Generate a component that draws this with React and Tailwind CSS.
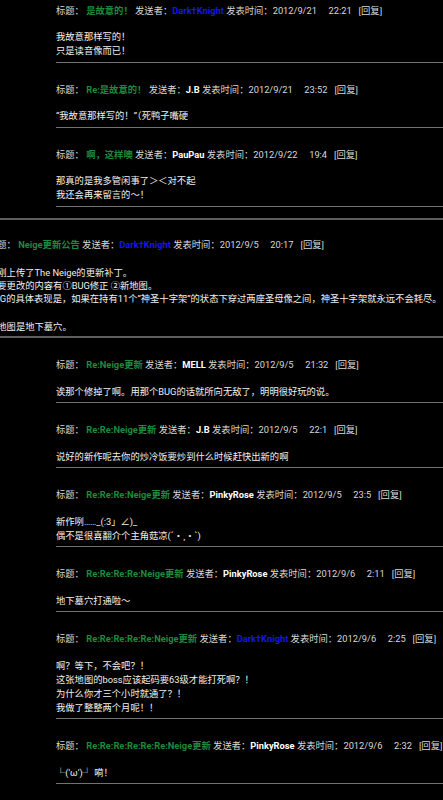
import React from "react";

const DK = "Dark†Knight";

const firstThreadReplies = [
  { title: "是故意的！", sender: DK, date: "2012/9/21", time: "22:21", lines: ["我故意那样写的！", "只是读音像而已！"] },
  { title: "Re:是故意的！", sender: "J.B", date: "2012/9/21", time: "23:52", lines: ["“我故意那样写的！”（死鸭子嘴硬"] },
  { title: "啊，这样噢", sender: "PauPau", date: "2012/9/22", time: "19:4", lines: ["那真的是我多管闲事了＞＜对不起", "我还会再来留言的～！"] },
];

const secondThreadReplies = [
  { title: "Re:Neige更新", sender: "MELL", date: "2012/9/5", time: "21:32", lines: ["诶那个修掉了啊。用那个BUG的话就所向无敌了，明明很好玩的说。"] },
  { title: "Re:Re:Neige更新", sender: "J.B", date: "2012/9/5", time: "22:1", lines: ["说好的新作呢去你的炒冷饭要炒到什么时候赶快出新的啊"] },
  { title: "Re:Re:Re:Neige更新", sender: "PinkyRose", date: "2012/9/5", time: "23:5", lines: ["新作咧……_(:3」∠)_", "偶不是很喜翻介个主角菇凉(´・¸・`)"] },
  { title: "Re:Re:Re:Re:Neige更新", sender: "PinkyRose", date: "2012/9/6", time: "2:11", lines: ["地下墓穴打通啦～"] },
  {
    title: "Re:Re:Re:Re:Re:Neige更新",
    sender: DK,
    date: "2012/9/6",
    time: "2:25",
    lines: ["啊？等下，不会吧？！", "这张地图的boss应该起码要63级才能打死啊？！", "为什么你才三个小时就通了？！", "我做了整整两个月呢！！"],
  },
  { title: "Re:Re:Re:Re:Re:Re:Neige更新", sender: "PinkyRose", date: "2012/9/6", time: "2:32", lines: ["└('ω')┘ 嗬！"] },
];

function Header({ title, sender, date, time }) {
  const blue = sender === DK;
  return (
    <div className="whitespace-nowrap leading-[14px] text-[#d8d8d8]">
      <span>标题：</span>{" "}
      <span className="font-bold text-[#1f8a3e]">{title}</span>{" "}
      <span>发送者：</span>
      <span className={blue ? "font-bold text-[#1818e0]" : "font-bold text-white"}>{sender}</span>{" "}
      <span>发表时间：{date}</span>
      <span>{"\u3000 "}{time}</span>
      <span>{"\u00a0\u00a0\u00a0[回复]"}</span>
    </div>
  );
}

function Reply(props) {
  return (
    <div className="pt-[20px] pb-[3.5px] border-b border-[#727272]">
      <Header {...props} />
      <div className="mt-[12.5px] text-[#f0f0f0]">
        {props.lines.map((l, i) => (
          <div key={i} className="whitespace-nowrap leading-[14px]">
            {l}
          </div>
        ))}
      </div>
    </div>
  );
}

export default function App() {
  return (
    <div className="min-h-screen w-full overflow-hidden bg-black text-[9.3px] font-[Roboto,'Noto_Sans_CJK_SC',sans-serif]">
      <div className="-ml-3 -mt-[16.5px]">
        {/* tail of the previous thread */}
        <div className="border-b-2 border-[#5e5e5e] pb-[11px]">
          <div className="ml-[68px]">
            {firstThreadReplies.map((r, i) => (
              <Reply key={i} {...r} />
            ))}
          </div>
        </div>

        {/* announcement thread */}
        <div className="pt-[18px] pb-[3.5px] border-b-2 border-[#5e5e5e]">
          <Header title="Neige更新公告" sender={DK} date="2012/9/5" time="20:17" />
          <div className="mt-[14px] text-[#f0f0f0] leading-[13px] whitespace-nowrap">
            <div>刚刚上传了The Neige的更新补丁。</div>
            <div>主要更改的内容有①BUG修正 ②新地图。</div>
            <div>BUG的具体表现是，如果在持有11个“神圣十字架”的状态下穿过两座圣母像之间，神圣十字架就永远不会耗尽。</div>
            <div className="h-[15px]" />
            <div>新地图是地下墓穴。</div>
          </div>
        </div>
        <div className="ml-[68px]">
          {secondThreadReplies.map((r, i) => (
            <Reply key={i} {...r} />
          ))}
        </div>
      </div>
    </div>
  );
}
